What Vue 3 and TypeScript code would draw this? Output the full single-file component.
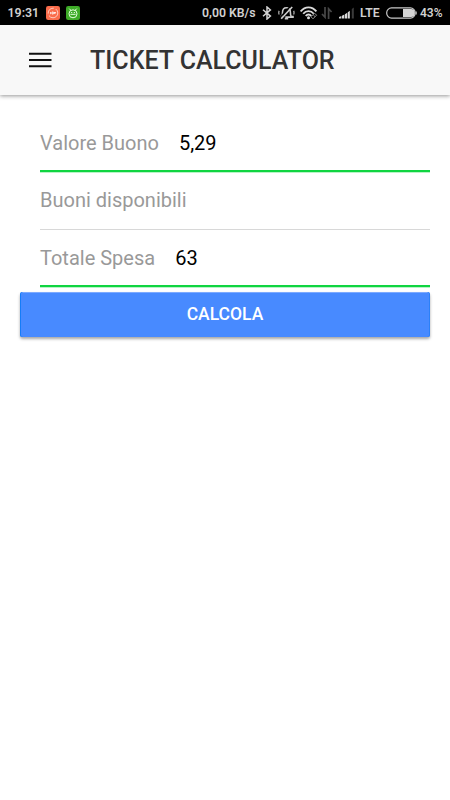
<script setup lang="ts">
import { reactive } from 'vue'

interface Field {
  id: string
  label: string
  value: string
}

const fields = reactive<Field[]>([
  { id: 'value', label: 'Valore Buono', value: '5,29' },
  { id: 'available', label: 'Buoni disponibili', value: '' },
  { id: 'total', label: 'Totale Spesa', value: '63' },
])
</script>

<template>
  <div class="screen">
    <div class="status">
      <span class="time">19:31</span>
      <svg class="app-badge" width="14" height="14" viewBox="0 0 14 14">
        <rect width="14" height="14" rx="2.2" fill="#fa6d4c" />
        <circle cx="7" cy="7" r="4.8" fill="none" stroke="#ffd5c9" stroke-width="0.9" stroke-dasharray="12 2 9 2" />
        <path d="M4.6 6v2.2M6 6h1.3v2H6zM8.4 8V6l1 1.3V6" fill="none" stroke="#fff" stroke-width="0.8" />
      </svg>
      <svg class="app-badge second" width="14" height="14" viewBox="0 0 14 14">
        <rect width="14" height="14" rx="2.2" fill="#3dab27" />
        <circle cx="7" cy="7.8" r="4" fill="none" stroke="#e3ffdc" stroke-width="1" />
        <path d="M3.2 2.6l1.7 1.7M10.8 2.6L9.1 4.3M4.4 8.3h5.2" fill="none" stroke="#e3ffdc" stroke-width="1" />
        <path d="M5.2 6.5h1M7.8 6.5h1" stroke="#fff" stroke-width="1" />
      </svg>
      <span class="spacer"></span>
      <span class="speed">0,00 KB/s</span>
      <svg class="bluetooth" width="10" height="14" viewBox="0 0 10 14">
        <path d="M1 3.7l7.4 6.4L5 13V1l3.4 2.9L1 10.3" fill="none" stroke="#d4d4d4" stroke-width="1.5" />
      </svg>
      <svg class="bell" width="17" height="14" viewBox="0 0 17 14">
        <path d="M2 10.6h1.6c.8-1 .9-2 .9-4C4.5 3.4 6 1.7 8.4 1.7s4 1.7 4 4.9c0 2 .1 3 .9 4H15v.5H7.4M6.8 12.6h3.4" fill="none" stroke="#cacaca" stroke-width="1.6" />
        <path d="M1.2 4.9c-.6 1.2-.6 2.4 0 3.6M15.6 4.9c.6 1.2.6 2.4 0 3.6" fill="none" stroke="#a8a8a8" stroke-width="1.3" />
        <path d="M12.7 0L1.8 11.8" stroke="#000" stroke-width="1.4" />
        <path d="M14.2 1L3.2 12.8" stroke="#d0d0d0" stroke-width="1.6" />
      </svg>
      <svg class="wifi" width="18" height="14" viewBox="0 0 18 14">
        <g fill="none" stroke="#dadada" stroke-width="1.8">
          <path d="M.6 5.4C5-.1 12-.1 16.4 5.4" />
          <path d="M3.2 7.8c2.9-3.7 7.7-3.7 10.6 0" />
          <path d="M5.7 10c1.6-2 4-2 5.6 0" />
        </g>
        <circle cx="8.5" cy="11.8" r="1.5" fill="#dadada" />
        <path d="M11 10.8l3.6-3.6 2 2-3.6 3.6zM13.2 8.8l1.8 1.8" fill="#000" stroke="#8e8e8e" stroke-width="1" />
      </svg>
      <svg class="arrows" width="12" height="12" viewBox="0 0 12 12">
        <path d="M4 0v10.2L1 7M7.6 12V1.8l3 3.2" fill="none" stroke="#484848" stroke-width="1.7" />
      </svg>
      <svg class="signal" width="15" height="12" viewBox="0 0 15 12">
        <path d="M0 11.5V10l2.4-.9v2.4zM3 11.5V8.8L5.4 7.5v4zM6 11.5V7.2l2.2-1.5v5.8zM8.8 11.5V5.2L10.8 3.7v7.8z" fill="#dcdcdc" />
        <path d="M12.8 11.5V2l2-1.5v11z" fill="#3b3b3b" />
      </svg>
      <span class="network">LTE</span>
      <svg class="battery" width="31" height="12" viewBox="0 0 31 12">
        <path d="M17 2.1h8a3.9 3.9 0 0 1 0 7.8h-8z" fill="#d4d4d4" />
        <rect x=".7" y=".9" width="28.5" height="10.2" rx="4.8" fill="none" stroke="#c8c8c8" stroke-width="1.2" />
        <path d="M30.2 4.4v3.2" stroke="#bbb" stroke-width="1.2" />
      </svg>
      <span class="percent">43%</span>
    </div>

    <header class="toolbar">
      <button class="menu" type="button">
        <svg width="23" height="16" viewBox="0 0 23 16">
          <path d="M0 1.8h22.5M0 8h22.5M0 14.2h22.5" stroke="#111" stroke-width="2" />
        </svg>
      </button>
      <h1 class="title">TICKET CALCULATOR</h1>
    </header>

    <main class="content">
      <div v-for="field in fields" :key="field.id" class="item" :class="{ valid: field.value !== '' }">
        <label class="label" :for="field.id">{{ field.label }}</label>
        <input :id="field.id" v-model="field.value" class="input" type="text" />
      </div>
      <button class="submit" type="button">CALCOLA</button>
    </main>
  </div>
</template>

<style>
body {
  margin: 0;
  background: #fff;
}
</style>

<style scoped>
.screen {
  width: 450px;
  height: 800px;
  overflow: hidden;
  background: #fff;
  font-family: Roboto, sans-serif;
}
.status {
  display: flex;
  align-items: center;
  box-sizing: border-box;
  height: 25px;
  padding: 0 8px 0 7.5px;
  background: #000;
  color: #d0d0d0;
  font-size: 12.4px;
  font-weight: 600;
  line-height: 26px;
  white-space: nowrap;
}
.status svg {
  flex: none;
}
.time {
  width: 38.5px;
}
.app-badge.second {
  margin-left: 6px;
}
.spacer {
  flex: 1;
}
.speed {
  width: 54px;
  font-size: 12.3px;
}
.bluetooth {
  margin-left: 6px;
}
.bell {
  margin-left: 6px;
}
.wifi {
  margin-left: 5px;
}
.arrows {
  margin-left: 3px;
}
.signal {
  margin-left: 6px;
}
.network {
  width: 21px;
  margin-left: 6px;
  font-size: 12.2px;
}
.battery {
  margin-left: 5px;
}
.percent {
  width: 22px;
  margin-left: 3px;
  font-size: 12px;
}
.toolbar {
  display: flex;
  align-items: center;
  height: 70px;
  background: #f8f8f8;
  box-shadow: 0 1px 4px rgba(0, 0, 0, 0.42);
}
.menu {
  display: flex;
  width: 90px;
  padding: 0 0 0 29px;
  border: 0;
  background: none;
}
.title {
  margin: 0;
  padding-top: 2px;
  color: #333;
  font-size: 25px;
  font-weight: 500;
  line-height: 30px;
}
.content {
  padding: 20px 20px 0;
}
.item {
  display: flex;
  align-items: center;
  box-sizing: border-box;
  height: 57.4px;
  margin-left: 20px;
  padding-bottom: 1px;
  border-bottom: 1px solid #d8d8d8;
}
.item.valid {
  padding: 1px 0 0;
  border-bottom: 2px solid #10d541;
  box-shadow: 0 1px 0 #b9f3c7;
}
.label {
  margin-right: 20px;
  color: #999;
  font-size: 20px;
  line-height: 24px;
}
.input {
  flex: 1;
  min-width: 0;
  padding: 0;
  border: 0;
  outline: 0;
  background: none;
  color: #000;
  font: 20px/24px Roboto, sans-serif;
}
.submit {
  display: block;
  box-sizing: border-box;
  width: 100%;
  height: 45px;
  margin: 5.2px 0 0;
  padding: 0 0 2px;
  border: 0;
  border-radius: 2.5px;
  background: #488aff;
  box-shadow:
    0 2px 3px rgba(0, 0, 0, 0.35),
    inset 1px 0 0 #157cf8,
    inset -1px 0 0 #2b80f8,
    inset 0 1px 0 #7daaff;
  color: #fff;
  font: 500 17.5px/42px Roboto, sans-serif;
}
</style>
